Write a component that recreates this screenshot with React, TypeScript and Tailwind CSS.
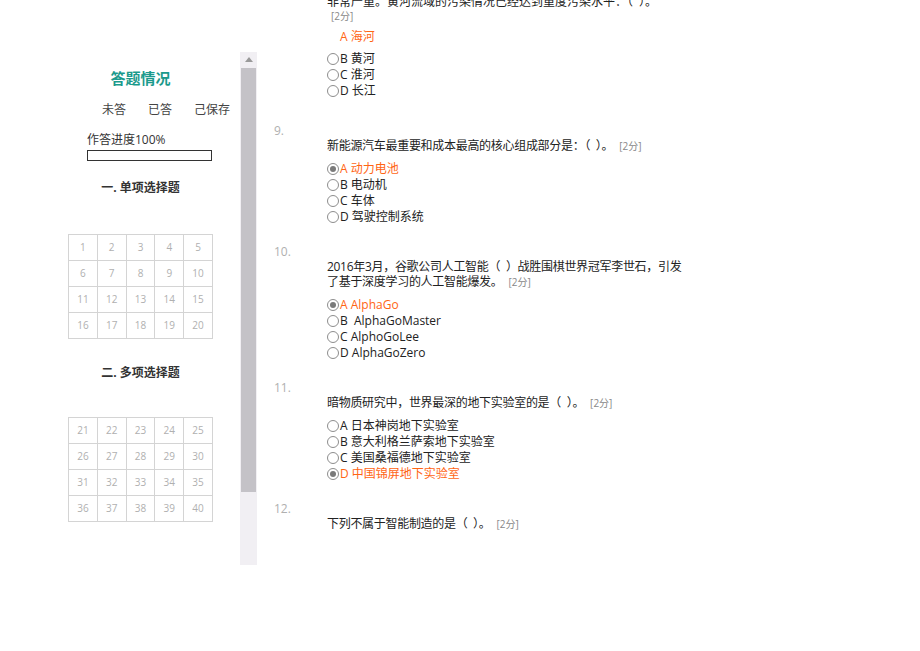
import React from 'react';

const FONT = '"Open Sans", "Noto Sans CJK SC", sans-serif';

interface Opt {
  label: string;
  checked?: boolean;
}

interface Q {
  num: string;
  lines: string[];
  options: Opt[];
}

const questions: Q[] = [
  {
    num: '9.',
    lines: ['新能源汽车最重要和成本最高的核心组成部分是：（\u2002）。'],
    options: [
      { label: 'A 动力电池', checked: true },
      { label: 'B 电动机' },
      { label: 'C 车体' },
      { label: 'D 驾驶控制系统' },
    ],
  },
  {
    num: '10.',
    lines: [
      '2016年3月，谷歌公司人工智能（\u2002）战胜围棋世界冠军李世石，引发',
      '了基于深度学习的人工智能爆发。',
    ],
    options: [
      { label: 'A AlphaGo', checked: true },
      { label: 'B  AlphaGoMaster' },
      { label: 'C AlphoGoLee' },
      { label: 'D AlphaGoZero' },
    ],
  },
  {
    num: '11.',
    lines: ['暗物质研究中，世界最深的地下实验室的是（\u2002）。'],
    options: [
      { label: 'A 日本神岗地下实验室' },
      { label: 'B 意大利格兰萨索地下实验室' },
      { label: 'C 美国桑福德地下实验室' },
      { label: 'D 中国锦屏地下实验室', checked: true },
    ],
  },
  {
    num: '12.',
    lines: ['下列不属于智能制造的是（\u2002）。'],
    options: [],
  },
];

function Radio({ checked }: { checked?: boolean }) {
  return (
    <span className="w-[12px] h-[12px] rounded-full border border-[#8d8d8d] bg-white flex items-center justify-center shrink-0">
      {checked && <span className="w-[6px] h-[6px] rounded-full bg-[#7a7a7a]" />}
    </span>
  );
}

function Option({ opt }: { opt: Opt }) {
  return (
    <div className="flex items-center h-[16px] text-[12px] leading-[16px] whitespace-pre">
      <Radio checked={opt.checked} />
      <span className={`ml-[1px] ${opt.checked ? 'text-[#ff6514]' : 'text-[#222]'}`}>{opt.label}</span>
    </div>
  );
}

function Question({ q, last }: { q: Q; last?: boolean }) {
  return (
    <div className={last ? '' : 'mb-[20px]'}>
      <div className="h-[14px] leading-[14px] text-[12px] text-[#b0b0b0] -ml-[2px]">{q.num}</div>
      <div className="pl-[51px]">
        <div className="text-[12px] leading-[15px] text-[#222] whitespace-pre tracking-[-0.3px]">
          {q.lines.map((l, i) => (
            <div key={i}>
              {l}
              {i === q.lines.length - 1 && (
                <span className="ml-[6px] text-[10px] text-[#888] tracking-normal">[2分]</span>
              )}
            </div>
          ))}
        </div>
        {q.options.length > 0 && (
          <div className="mt-[7px]">
            {q.options.map((o) => (
              <Option key={o.label} opt={o} />
            ))}
          </div>
        )}
      </div>
    </div>
  );
}

function NumGrid({ start }: { start: number }) {
  const nums = Array.from({ length: 20 }, (_, i) => start + i);
  return (
    <div className="grid grid-cols-5 border-t border-l border-[#d4d4d4] w-[145px]">
      {nums.map((n) => (
        <div
          key={n}
          className="h-[26px] flex items-center justify-center border-r border-b border-[#d4d4d4] text-[10px] text-[#b0b0b0]"
        >
          {n}
        </div>
      ))}
    </div>
  );
}

export default function App() {
  return (
    <div className="w-[920px] h-[651px] overflow-hidden bg-white flex" style={{ fontFamily: FONT }}>
      {/* Sidebar */}
      <div className="ml-[68px] w-[145px] shrink-0 flex flex-col">
        <div className="mt-[68px] h-[20px] leading-[20px] text-center text-[15px] font-bold text-[#1b9a8c]">
          答题情况
        </div>
        <div className="mt-[14px] ml-[34px] flex gap-[22px] text-[12px] leading-[16px] text-[#444] whitespace-nowrap">
          <span>未答</span>
          <span>已答</span>
          <span>己保存</span>
        </div>
        <div className="mt-[14px] ml-[19px] text-[12px] leading-[16px] text-[#333]">作答进度100%</div>
        <div className="mt-[2px] ml-[19px] w-[125px] h-[11px] border border-[#333] bg-white" />
        <div className="mt-[19px] h-[16px] leading-[16px] text-center text-[12px] font-bold text-[#333]">
          一. 单项选择题
        </div>
        <div className="mt-[38px]">
          <NumGrid start={1} />
        </div>
        <div className="mt-[26px] h-[16px] leading-[16px] text-center text-[12px] font-bold text-[#333]">
          二. 多项选择题
        </div>
        <div className="mt-[36px]">
          <NumGrid start={21} />
        </div>
      </div>

      {/* Scrollbar */}
      <div className="ml-[27px] mt-[52px] w-[17px] h-[513px] bg-[#f1eff3] shrink-0 flex flex-col items-center">
        <div className="h-[15px] w-full flex items-center justify-center">
          <svg width="8" height="5" viewBox="0 0 8 5">
            <path d="M4 0 L8 5 L0 5 Z" fill="#9a9a9a" />
          </svg>
        </div>
        <div className="mt-[1px] w-[15px] h-[424px] bg-[#c4c2c7]" />
      </div>

      {/* Main */}
      <div className="ml-[19px] w-[420px] shrink-0">
        <div className="-mt-[6px] pl-[51px]">
          <div className="text-[12px] leading-[15px] text-[#222] whitespace-pre">
            非常严重。黄河流域的污染情况已经达到重度污染水平：（{'\u2002'}）。
          </div>
          <div className="pl-[4px] text-[10px] leading-[15px] text-[#888]">[2分]</div>
          <div className="mt-[5px] pl-[13px] h-[16px] leading-[16px] text-[12px] text-[#ff6514]">A 海河</div>
          <div className="mt-[6px]">
            <Option opt={{ label: 'B 黄河' }} />
            <Option opt={{ label: 'C 淮河' }} />
            <Option opt={{ label: 'D 长江' }} />
          </div>
        </div>
        <div className="mt-[25px]">
          {questions.map((q, i) => (
            <Question key={q.num} q={q} last={i === questions.length - 1} />
          ))}
        </div>
      </div>
    </div>
  );
}
